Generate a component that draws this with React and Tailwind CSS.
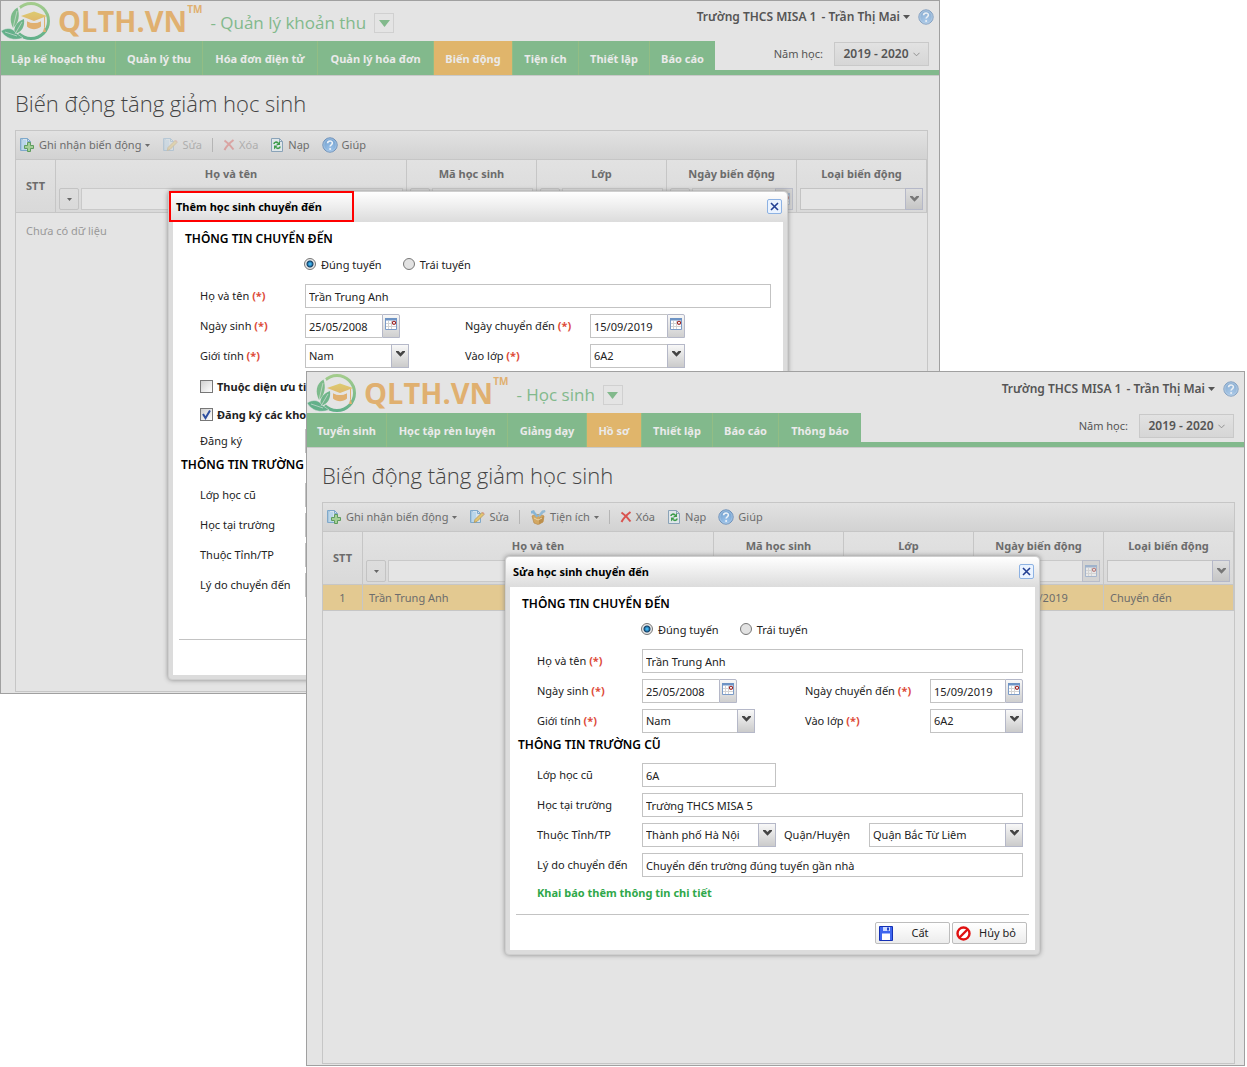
import { useId } from "react";
import { clsx } from "clsx";

const financeTabs = [
  { name: "Lập kế hoạch thu", width: "w-[115px]" },
  { name: "Quản lý thu", width: "w-[87px]" },
  { name: "Hóa đơn điện tử", width: "w-[115px]" },
  { name: "Quản lý hóa đơn", width: "w-[116px]" },
  { name: "Biến động", width: "w-[79px]", active: true },
  { name: "Tiện ích", width: "w-[66px]" },
  { name: "Thiết lập", width: "w-[71px]" },
  { name: "Báo cáo", width: "w-[65px]" },
];

const studentTabs = [
  { name: "Tuyển sinh", width: "w-[80px]" },
  { name: "Học tập rèn luyện", width: "w-[121px]" },
  { name: "Giảng dạy", width: "w-[79px]" },
  { name: "Hồ sơ", width: "w-[55px]", active: true },
  { name: "Thiết lập", width: "w-[71px]" },
  { name: "Báo cáo", width: "w-[66px]" },
  { name: "Thông báo", width: "w-[82px]" },
];

/* ICONS */

const Logo = () => (
  <svg viewBox="0 0 50 40" className="w-[50px] h-10 shrink-0" aria-hidden="true">
    <defs>
      <linearGradient id="ring" x1="0" y1="0" x2="0" y2="1">
        <stop offset="0" stopColor="#a3cc8c" />
        <stop offset="1" stopColor="#62b08a" />
      </linearGradient>
      <linearGradient id="cap" x1="0" y1="0" x2="0" y2="1">
        <stop offset="0" stopColor="#dccb70" />
        <stop offset="1" stopColor="#e0b86c" />
      </linearGradient>
    </defs>
    <circle cx="30" cy="20" r="17.5" fill="none" stroke="url(#ring)" strokeWidth="3" />
    <path d="M18 5C9 9 7 17 10 25l6 9c6-4 8-11 5-17 1-4-1-9-3-12z" fill="#e4e4e4" />
    <path d="M16.500 6.500C9 11 8 19 12 27 18 22 19 14 16.500 6.500z" fill="#7dbb8b" />
    <path d="M23 18c-8 3-11 9-9 15 7-2 10-8 9-15z" fill="#6fb58a" />
    <path d="M0 30c6-4 12-3 15 2l7 5C13 40 5 38 0 30z" fill="#63b08a" stroke="#e4e4e4" strokeWidth=".5" />
    <path d="M16 10l-4 17M21 21l-7 12M4 31l12 4" fill="none" stroke="#e4e4e4" strokeWidth=".6" />
    <path d="M20 15l13-4.500L46 15l-13 5z" fill="url(#cap)" />
    <path d="M26 20c4 2.500 10 2.500 14 0v5.500c-4 3.500-10 3.500-14 0z" fill="#e0b070" />
    <path d="M26 19.500c4 2.500 10 2.500 14 0" fill="none" stroke="#e4e4e4" strokeWidth="1.200" />
    <path d="M43.500 16v10" stroke="#e0b070" strokeWidth="1" />
    <path d="M43.500 25l1.500 6h-3z" fill="#e0b070" />
  </svg>
);

const Caret = ({ className = "w-[5px] h-[3px]" }) => (
  <svg viewBox="0 0 10 6" preserveAspectRatio="none" className={clsx("shrink-0", className)} fill="currentColor" aria-hidden="true">
    <path d="M0 0h10L5 6z" />
  </svg>
);

const Chevron = () => (
  <svg viewBox="0 0 9 6" className="w-[9px] h-1.5" fill="currentColor" aria-hidden="true">
    <path d="M0 0h2.500l2 2 2-2H9v1L4.500 5.800 0 1z" />
  </svg>
);

const HelpIcon = () => (
  <svg viewBox="0 0 16 16" className="w-4 h-4 shrink-0" aria-hidden="true">
    <defs>
      <radialGradient id="help" cx=".5" cy=".8" r=".8">
        <stop offset="0" stopColor="#9cc3ea" />
        <stop offset="1" stopColor="#6f9dcc" />
      </radialGradient>
    </defs>
    <circle cx="8" cy="8" r="7.200" fill="url(#help)" stroke="#7193bb" strokeWidth="1" />
    <circle cx="8" cy="8" r="6.200" fill="none" stroke="#b9d2ea" strokeWidth=".6" />
    <path d="M5.600 6.300c0-3.200 4.900-3 4.800-.2 0 1.800-2.300 1.700-2.300 3.500" fill="none" stroke="#eef3f8" strokeWidth="1.600" />
    <circle cx="8.100" cy="12" r="1" fill="#eef3f8" />
  </svg>
);

const PageShape = () => (
  <>
    <path d="M1.500 1.500h7l3 3v9h-10z" fill="#d5e3ee" stroke="#7fa9cb" />
    <path d="M8.500 1.500v3h3M3 2v11" fill="none" stroke="#7fa9cb" />
    <path d="M3 3h4v10H3z" fill="#b9d6ea" />
  </>
);

const AddIcon = () => (
  <svg viewBox="0 0 16 16" className="w-4 h-4 shrink-0" aria-hidden="true">
    <PageShape />
    <path d="M8.500 5.500h3v3h3v3h-3v3h-3v-3h-3v-3h3z" fill="#a4cf97" stroke="#5f9c5f" />
  </svg>
);

const EditIcon = () => (
  <svg viewBox="0 0 16 16" className="w-4 h-4 shrink-0" aria-hidden="true">
    <PageShape />
    <path d="M13 3.500l2 2-7 7-2.800 1 .8-3z" fill="#e3c56f" stroke="#b4955a" strokeWidth=".8" />
    <path d="M13 3.500l2 2 .5-1-1.500-1.500z" fill="#d98f7e" />
  </svg>
);

const ToolsIcon = () => (
  <svg viewBox="0 0 16 16" className="w-4 h-4 shrink-0" aria-hidden="true">
    <path d="M2 7c3-2 9-2 12 0l-1 6-5 2.500L4 14z" fill="#d3a863" stroke="#b98d4e" strokeWidth=".7" />
    <path d="M9 9v6.500l4-2.500 1-6z" fill="#bd904d" />
    <path d="M1 2l3-1 1 2 3.500 4-2 1.500L3 4.500H1z" fill="#86b4d6" />
    <path d="M15 1l-3 .5-4 5 1.500 1.500 4-4L15.500 3z" fill="#92b9d4" />
    <path d="M4 9l4 2 4-2" fill="none" stroke="#ead3a4" />
  </svg>
);

const DeleteIcon = () => (
  <svg viewBox="0 0 12 12" className="w-3 h-3 shrink-0" aria-hidden="true">
    <path d="M1.500 1.500c3 2 6 5 9 9M10.500 1c-4 3-7 6-9 10" fill="none" stroke="#d9534f" strokeWidth="2" />
  </svg>
);

const ReloadIcon = () => (
  <svg viewBox="0 0 14 16" className="w-3.5 h-4 shrink-0" aria-hidden="true">
    <path d="M1.500 1.500h8l3 3v10h-11z" fill="#dfe6ea" stroke="#8aa3b8" />
    <path d="M9.500 1.500v3h3" fill="none" stroke="#8aa3b8" />
    <path d="M4 7c0-2 2.500-2.500 4-1M10 9.500c0 2-2.500 2.500-4 1" fill="none" stroke="#3f9d4c" strokeWidth="1.600" />
    <path d="M10 4v4H6.200zM4 12.500v-4h3.800z" fill="#3f9d4c" />
  </svg>
);

const CalendarIcon = () => (
  <svg viewBox="0 0 14 14" className="w-3.5 h-3.5" aria-hidden="true">
    <path d="M1.500 1.500h11v11h-11z" fill="#fff" stroke="#7a9bc8" />
    <path d="M1 1h12v2.500H1z" fill="#6d93c4" />
    <path d="M4.500 4v8M7.500 4v8M2 6.500h10M2 9.500h10" stroke="#d3d3d3" />
    <circle cx="10" cy="5.800" r="1.600" fill="#fff" stroke="#9b2020" strokeWidth="1.100" />
  </svg>
);

const SaveIcon = () => (
  <svg viewBox="0 0 14 15" className="w-3.5 h-[15px]" aria-hidden="true">
    <path d="M.5.5h13v14H.5z" fill="#3f66ee" stroke="#1430b4" />
    <path d="M4 1h7v4H4z" fill="#cfdcff" />
    <path d="M8 1.500h2v3H8z" fill="#2344cc" />
    <path d="M3 8h8v6H3z" fill="#fff" />
    <path d="M3 7.500h8" stroke="#9db4fa" />
  </svg>
);

const CancelIcon = () => (
  <svg viewBox="0 0 15 15" className="w-[15px] h-[15px]" aria-hidden="true">
    <circle cx="7.500" cy="7.500" r="6" fill="#fff" stroke="#e01010" strokeWidth="2.400" />
    <path d="M11.500 3.500l-8 8" stroke="#e01010" strokeWidth="2.400" />
  </svg>
);

/* FORM CONTROLS */

const TextBox = ({ className, ...props }) => (
  <input type="text" className={clsx("h-6 min-w-0 border border-[#c3c3c3] bg-white px-[3px] outline-none", className)} {...props} />
);

const DateBox = ({ id, value, className }) => (
  <span className={clsx("flex h-6 shrink-0", className)}>
    <TextBox id={id} defaultValue={value} className="flex-1 border-r-0" />
    <button type="button" aria-label="Chọn ngày" className="w-[18px] h-6 flex items-start justify-center pt-0.5 border border-[#b5b8c8] rounded-tr-xs bg-linear-to-b from-[#f8f8f8] to-[#cfcfcf]">
      <CalendarIcon />
    </button>
  </span>
);

const SelectBox = ({ id, value, label, className, muted }) => (
  <span className={clsx("relative flex", muted ? "h-[22px]" : "h-6 shrink-0", className)}>
    <select
      id={id}
      aria-label={label}
      className={clsx("w-full h-full appearance-none border border-[#c3c3c3] pl-[3px] pr-5 outline-none", muted ? "bg-[#e5e5e5]" : "bg-white")}
    >
      <option>{value}</option>
    </select>
    <span
      className={clsx(
        "absolute right-0 inset-y-0 w-[18px] flex justify-center border border-[#b5b8c8] pointer-events-none",
        muted ? "pt-[7px] bg-linear-to-b from-[#dedede] to-[#c6c6c6] text-[#777]" : "pt-1.5 bg-linear-to-b from-[#f8f8f8] to-[#cbcbcb] text-[#444]"
      )}
    >
      <Chevron />
    </span>
  </span>
);

const Field = ({ id, text, required, className = "w-[105px]" }) => (
  <label htmlFor={id} className={clsx("shrink-0 whitespace-nowrap", className)}>
    {text} {required && <b className="text-[#dd4b39]">(*)</b>}
  </label>
);

const Row = ({ children }) => (
  <div className="flex items-center h-6 mb-1.5 pl-[27px] pr-3">{children}</div>
);

const Radio = ({ name, text, checked }) => (
  <label className="flex items-center gap-[5px]">
    <input
      type="radio"
      name={name}
      defaultChecked={checked}
      className="appearance-none w-3 h-3 mb-[3px] rounded-full border border-[#777] bg-[#e2e2e2] checked:bg-[radial-gradient(circle,#3fb2ee_0_1px,#123f66_3px,#e8e8e8_4px)]"
    />
    {text}
  </label>
);

const CheckRow = ({ text, checked }) => (
  <label className="flex items-center gap-1 h-[26px] pl-[27px] font-bold">
    <span className="relative w-[13px] h-[13px] mb-0.5">
      <input type="checkbox" defaultChecked={checked} className="peer appearance-none block w-[13px] h-[13px] border border-[#777] bg-linear-to-br from-[#d0d0d0] to-white" />
      <svg viewBox="0 0 13 13" className="absolute inset-0 hidden peer-checked:block pointer-events-none" aria-hidden="true">
        <path d="M3 6l2.500 4L10 2.500" fill="none" stroke="#2e4fa0" strokeWidth="2" />
      </svg>
    </span>
    {text}
  </label>
);

const FormButton = ({ icon, text }) => (
  <button type="button" className="flex items-center w-[75px] h-[22px] pl-[3px] border border-[#bdbdbd] rounded-xs bg-linear-to-b from-white to-[#ececec]">
    {icon}
    <span className="flex-1 text-center pr-0.5">{text}</span>
  </button>
);

/* TRANSFER DIALOG */

const TransferDialog = ({ title, highlighted, withFees, student, oldSchool, midWidth, genderWidth, classWidth, className }) => {
  const id = useId();

  return (
    <div
      role="dialog"
      aria-label={title}
      className={clsx("absolute flex flex-col border border-[#cfcfcf] rounded-sm bg-[#dcdcdc] text-[#222] shadow-[0_0_5px_#888]", className)}
    >
      <div className="relative flex items-center justify-between h-[30px] pl-[7px] pr-[5px] rounded-t-sm bg-linear-to-b from-white to-[#dcdcdc]">
        <h2 className="font-bold text-black">{title}</h2>
        {highlighted && <span className="absolute -top-px left-0 w-[185px] h-[31px] border-2 border-[#ff0000]" />}
        <button type="button" aria-label="Đóng" className="w-[15px] h-[15px] mb-0.5 flex items-center justify-center border border-[#8db2e3] rounded-xs bg-[#eaf3ff]">
          <svg viewBox="0 0 9 9" className="w-[9px] h-[9px]" aria-hidden="true">
            <path d="M1 1l7 7M8 1L1 8" stroke="#233f93" strokeWidth="1.600" />
          </svg>
        </button>
      </div>

      <form className="flex flex-col flex-1 mx-1 mb-1 bg-white">
        <h3 className="flex items-center h-[34px] pl-3 text-xs font-semibold text-black">THÔNG TIN CHUYỂN ĐẾN</h3>
        <div className="flex items-center h-[18px] mb-2.5 pl-[131px] gap-[21px]">
          <Radio name={id} text="Đúng tuyến" checked />
          <Radio name={id} text="Trái tuyến" />
        </div>

        <Row>
          <Field id={id + "name"} text="Họ và tên" required />
          <TextBox id={id + "name"} defaultValue={student.name} className="flex-1" />
        </Row>
        <Row>
          <Field id={id + "birth"} text="Ngày sinh" required />
          <div className={midWidth}>
            <DateBox id={id + "birth"} value={student.birthday} className="w-[95px]" />
          </div>
          <Field id={id + "date"} text="Ngày chuyển đến" required className="w-[125px]" />
          <DateBox id={id + "date"} value={student.date} className={classWidth} />
        </Row>
        <Row>
          <Field id={id + "gender"} text="Giới tính" required />
          <div className={midWidth}>
            <SelectBox id={id + "gender"} value={student.gender} className={genderWidth} />
          </div>
          <Field id={id + "class"} text="Vào lớp" required className="w-[125px]" />
          <SelectBox id={id + "class"} value={student.className} className={classWidth} />
        </Row>

        {withFees && (
          <>
            <CheckRow text="Thuộc diện ưu tiên" />
            <div className="h-0.5" />
            <CheckRow text="Đăng ký các khoản thu" checked />
            <div className="h-px" />
            <Row>
              <Field id={id + "fees"} text="Đăng ký" />
              <TextBox id={id + "fees"} className="flex-1" />
            </Row>
          </>
        )}

        <h3 className="flex items-center h-6 pb-3 pl-2 text-xs font-semibold text-black">THÔNG TIN TRƯỜNG CŨ</h3>
        <Row>
          <Field id={id + "old"} text="Lớp học cũ" />
          <TextBox id={id + "old"} defaultValue={oldSchool.className} className="w-[134px]" />
        </Row>
        <Row>
          <Field id={id + "school"} text="Học tại trường" />
          <TextBox id={id + "school"} defaultValue={oldSchool.name} className="flex-1" />
        </Row>
        <Row>
          <Field id={id + "city"} text="Thuộc Tỉnh/TP" />
          <SelectBox id={id + "city"} value={oldSchool.city} className="w-[134px]" />
          <Field id={id + "district"} text="Quận/Huyện" className="w-[93px] pl-2" />
          <div className="flex-1">
            <SelectBox id={id + "district"} value={oldSchool.district} />
          </div>
        </Row>
        <Row>
          <Field id={id + "reason"} text="Lý do chuyển đến" />
          <TextBox id={id + "reason"} defaultValue={oldSchool.reason} className="flex-1" />
        </Row>
        {!withFees && (
          <a href="#" className="flex items-center h-5 mb-[11px] pl-[27px] font-bold text-[#2fa84a]">
            Khai báo thêm thông tin chi tiết
          </a>
        )}

        <div className="flex justify-end gap-0.5 h-9 mt-auto mx-1.5 pt-[7px] pr-0.5 border-t border-[#c3c3c3]">
          <FormButton icon={<SaveIcon />} text="Cất" />
          <FormButton icon={<CancelIcon />} text="Hủy bỏ" />
        </div>
      </form>
    </div>
  );
};

/* TOOLBAR + GRID */

const Tool = ({ icon, text, menu, disabled }) => (
  <button type="button" disabled={disabled} className={clsx("flex items-center gap-1 whitespace-nowrap", disabled && "opacity-40")}>
    {icon}
    {text}
    {menu && <Caret />}
  </button>
);

const Separator = () => <span className="w-px h-3.5 -mx-0.5 bg-[#b5b5b5]" />;

const Toolbar = ({ full }) => (
  <div className="flex items-center gap-3 h-7 pl-[3px] text-[#6c6c6c] bg-linear-to-b from-[#e2e2e2] to-[#d2d2d2]">
    <Tool icon={<AddIcon />} text="Ghi nhận biến động" menu />
    <Tool icon={<EditIcon />} text="Sửa" disabled={!full} />
    <Separator />
    {full && (
      <>
        <Tool icon={<ToolsIcon />} text="Tiện ích" menu />
        <Separator />
      </>
    )}
    <Tool icon={<DeleteIcon />} text="Xóa" disabled={!full} />
    <Tool icon={<ReloadIcon />} text="Nạp" />
    <Tool icon={<HelpIcon />} text="Giúp" />
  </div>
);

const Filter = ({ label, date }) => (
  <div className="flex gap-0.5 h-[22px] px-[3px]">
    <button type="button" aria-label="Điều kiện lọc" className="w-5 shrink-0 flex items-center justify-center border border-[#c3c3c3] rounded-xs text-[#666]">
      <Caret />
    </button>
    <input type="text" aria-label={label} className="flex-1 min-w-0 border border-[#c9c9c9] bg-[#e5e5e5]" />
    {date && (
      <button type="button" aria-label="Chọn ngày" className="w-[18px] shrink-0 -ml-1 flex items-center justify-center border border-[#b9bcc8] bg-[#d3d3d3]">
        <span className="opacity-50"><CalendarIcon /></span>
      </button>
    )}
  </div>
);

const columns = ["Họ và tên", "Mã học sinh", "Lớp", "Ngày biến động", "Loại biến động"];

const Grid = ({ rows }) => (
  <table className="w-full table-fixed border-separate border-spacing-0 border-t border-[#c6c6c6] text-[#6c6c6c]">
    <colgroup>
      <col className="w-10" />
      <col />
      <col className="w-[130px]" />
      <col className="w-[130px]" />
      <col className="w-[130px]" />
      <col className="w-[130px]" />
    </colgroup>
    <thead className="bg-linear-to-b from-[#e2e2e2] to-[#d9d9d9]">
      <tr className="h-7">
        <th rowSpan={2} className="border-r border-b border-[#c6c6c6]">STT</th>
        {columns.map((name) => (
          <th key={name} className="border-r border-[#c6c6c6]">{name}</th>
        ))}
      </tr>
      <tr className="h-[25px]">
        {columns.map((name, idx) => (
          <td key={name} className="border-r border-b border-[#c6c6c6] p-0 align-top">
            {idx === 4 ? (
              <SelectBox label={name} muted className="mx-[3px]" />
            ) : (
              <Filter label={name} date={idx === 3} />
            )}
          </td>
        ))}
      </tr>
    </thead>
    <tbody>
      {rows.length === 0 && (
        <tr className="h-9">
          <td colSpan={6} className="pl-2.5 text-[#999]">Chưa có dữ liệu</td>
        </tr>
      )}
      {rows.map((row) => (
        <tr key={row.no} className="h-[26px] bg-[#e3c991]">
          <td className="border-r border-b border-[#c6c6c6] text-center">{row.no}</td>
          <td className="border-r border-b border-[#c6c6c6] pl-1.5">{row.name}</td>
          <td className="border-r border-b border-[#c6c6c6] pl-1.5">{row.code}</td>
          <td className="border-r border-b border-[#c6c6c6] pl-1.5">{row.className}</td>
          <td className="border-r border-b border-[#c6c6c6] text-center">{row.date}</td>
          <td className="border-r border-b border-[#c6c6c6] pl-1.5">{row.kind}</td>
        </tr>
      ))}
    </tbody>
  </table>
);

/* WINDOW */

const AppWindow = ({ module, tabs, full, rows, className, mainClassName, children }) => (
  <section className={clsx("relative flex flex-col border border-[#a0a0a0] bg-[#e4e4e4]", className)}>
    <header className="flex border-b border-[#c9c9c9]">
      <div className="shrink-0">
        <div className="flex h-10 font-['Open_Sans',sans-serif]">
          <Logo />
          <span className="self-center pl-[7px] text-[29px] leading-9 font-bold text-[#e0b070]">QLTH.VN</span>
          <span className="pt-0.5 text-[10px] leading-3 font-bold text-[#e0b070]">TM</span>
          <div className="flex items-center gap-2 pl-2 pt-1 text-[17px] text-[#82b98c]">
            <span>- {module}</span>
            <button type="button" aria-label="Chọn phân hệ" className="w-5 h-5 flex items-center justify-center border border-[#d0d0d0]">
              <Caret className="w-[11px] h-[7px]" />
            </button>
          </div>
        </div>
        <nav className="flex h-[34px]">
          {tabs.map((tab) => (
            <a
              key={tab.name}
              href="#"
              className={clsx(
                "flex items-center justify-center pt-0.5 border-r border-[#93bd84] font-bold whitespace-nowrap text-[#eaeaea] last:border-r-0",
                tab.active ? "bg-[#e0b56b]" : "bg-[#82b98c]",
                tab.width
              )}
            >
              {tab.name}
            </a>
          ))}
        </nav>
      </div>

      {/* the account line may be wider than the free space beside the tabs */}
      <div className="flex-1 min-w-0 flex flex-col items-end border-b-[5px] border-[#82b98c] text-[#555]">
        <div className="flex items-center h-8 pr-[5px] gap-[5px] text-xs font-semibold whitespace-nowrap">
          <span>Trường THCS MISA 1</span>
          <button type="button" className="flex items-center gap-[3px]">
            - Trần Thị Mai <Caret className="w-[7px] h-1" />
          </button>
          <span className="pl-[3px] opacity-80"><HelpIcon /></span>
        </div>
        <div className="flex items-center gap-[11px] pt-[9px] pr-2.5">
          <span>Năm học:</span>
          <button type="button" className="flex items-center justify-center gap-1 w-[95px] h-6 border border-[#c9c9c9] bg-linear-to-b from-[#e2e2e2] to-[#d6d6d6] text-xs font-semibold">
            2019 - 2020
            <svg viewBox="0 0 8 5" className="w-[7px] h-[5px]" aria-hidden="true">
              <path d="M.5.5L4 4 7.500.5" fill="none" stroke="#888" />
            </svg>
          </button>
        </div>
      </div>
    </header>

    <main className={clsx("flex flex-col flex-1 pb-px", mainClassName)}>
      <h1 className="flex items-center h-[54px] font-['Open_Sans',sans-serif] font-light text-[22px] text-[#444]">Biến động tăng giảm học sinh</h1>
      <div className="flex-1 border border-[#c6c6c6]">
        <Toolbar full={full} />
        <Grid rows={rows} />
      </div>
    </main>

    {children}
  </section>
);

const App = () => {
  const student = { name: "Trần Trung Anh", birthday: "25/05/2008", date: "15/09/2019", gender: "Nam", className: "6A2" };

  return (
    <div className="text-[11px] leading-4 font-['Noto_Sans','Open_Sans',sans-serif] bg-white pb-px">
      <AppWindow
        module="Quản lý khoản thu"
        tabs={financeTabs}
        rows={[]}
        className="mr-[307px] min-h-[694px]"
        mainClassName="pl-3.5 pr-[11px]"
      >
        <TransferDialog
          title="Thêm học sinh chuyển đến"
          highlighted
          withFees
          student={student}
          oldSchool={{}}
          midWidth="w-[160px]"
          genderWidth="w-[104px]"
          classWidth="w-[95px]"
          className="top-[190px] left-[167px] w-[620px] min-h-[489px]"
        />
      </AppWindow>

      <AppWindow
        module="Học sinh"
        tabs={studentTabs}
        full
        rows={[{ no: 1, name: "Trần Trung Anh", code: "", className: "6A2", date: "15/09/2019", kind: "Chuyển đến" }]}
        className="ml-[306px] mr-0.5 -mt-[323px] min-h-[695px] pt-px"
        mainClassName="pl-[15px] pr-[9px]"
      >
        <TransferDialog
          title="Sửa học sinh chuyển đến"
          student={student}
          oldSchool={{
            className: "6A",
            name: "Trường THCS MISA 5",
            city: "Thành phố Hà Nội",
            district: "Quận Bắc Từ Liêm",
            reason: "Chuyển đến trường đúng tuyến gần nhà",
          }}
          midWidth="w-[163px]"
          genderWidth="w-[113px]"
          classWidth="w-[93px]"
          className="top-[184px] left-[198px] w-[535px]"
        />
      </AppWindow>
    </div>
  );
};

export default App;
